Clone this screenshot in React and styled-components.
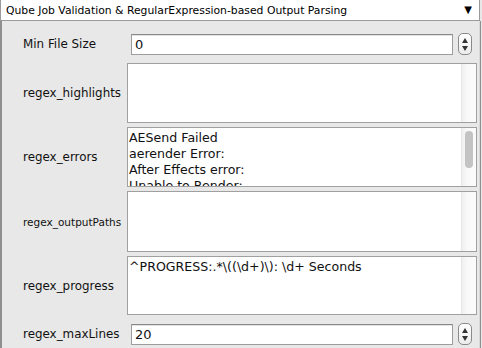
import React from 'react';
import styled, { createGlobalStyle } from 'styled-components';

const GlobalStyle = createGlobalStyle`
  html, body {
    margin: 0;
    padding: 0;
    background: #e8e8e8;
  }
  body {
    font-family: "DejaVu Sans", "Liberation Sans", sans-serif;
    color: #111;
  }
`;

const Frame = styled.div`
  width: 482px;
  height: 348px;
  display: flex;
  flex-direction: column;
  overflow: hidden;
  background: #e8e8e8;
`;

const Header = styled.div`
  flex: none;
  display: flex;
  align-items: center;
  justify-content: space-between;
  padding: 0 7px 0 5px;
  margin-right: 2px;
  background: #fff;
  border-left: 1px solid #9a9a9a;
  border-right: 1px solid #9a9a9a;
  border-bottom: 1px solid #9a9a9a;
  box-sizing: border-box;
  height: 21px;
  font-size: 10.8px;
  color: #000;
`;

const Arrow = styled.span`
  font-size: 10px;
  line-height: 1;
`;

const Panel = styled.div`
  flex: 1;
  display: flex;
  flex-direction: column;
  gap: 4px;
  padding-top: 12px;
  margin-right: 1px;
  border-left: 2px solid #8f8f8f;
  border-right: 1px solid #8f8f8f;
  box-shadow: inset -1px 0 0 #d8d8d8;
`;

const Row = styled.div`
  display: grid;
  grid-template-columns: 125px 1fr;
  align-items: center;
  height: ${(p) => p.h}px;
  margin-top: ${(p) => p.mt || 0}px;
`;

const Label = styled.div`
  padding-left: 21px;
  font-size: ${(p) => (p.small ? 10.5 : 11.9)}px;
  white-space: nowrap;
`;

const FieldLine = styled.div`
  display: flex;
  align-items: center;
  height: 100%;
  padding-left: 4px;
  padding-right: 8px;
`;

const Input = styled.div`
  flex: 1;
  height: 21px;
  box-sizing: border-box;
  background: #fff;
  border: 1px solid #9d9d9d;
  border-top-color: #8a8a8a;
  box-shadow: inset 0 1px 0 #e2e2e2;
  font-size: 13px;
  line-height: 19px;
  padding-left: 3px;
`;

const Spinner = styled.div`
  flex: none;
  width: 14px;
  height: 22px;
  margin-left: 5px;
  box-sizing: border-box;
  border: 1px solid #8a8a8a;
  border-radius: 5px;
  background: linear-gradient(#ffffff, #ececec);
  display: flex;
  flex-direction: column;
  align-items: center;
  justify-content: center;
  gap: 3px;
`;

const Tri = styled.span`
  width: 0;
  height: 0;
  border-left: 3px solid transparent;
  border-right: 3px solid transparent;
  ${(p) => (p.up ? 'border-bottom: 5px solid #333;' : 'border-top: 5px solid #333;')}
`;

const Area = styled.div`
  height: 100%;
  margin-right: 3px;
  box-sizing: border-box;
  background: #fff;
  border: 1px solid #a0a0a0;
  display: flex;
  overflow: hidden;
`;

const AreaText = styled.div`
  flex: 1;
  padding: 2px 0 0 1px;
  font-size: 12.6px;
  line-height: 16px;
  white-space: pre;
  overflow: hidden;
`;

const Track = styled.div`
  flex: none;
  width: 15px;
  background: linear-gradient(90deg, #f0f0f0, #f9f9f9 40%, #fbfbfb);
  border-left: 1px solid #e6e6e6;
  padding: 3px 2px 0 3px;
  box-sizing: border-box;
`;

const Thumb = styled.div`
  width: 8px;
  height: 37px;
  border-radius: 4px;
  background: #c3c3c3;
`;

function NumberRow({ label, value, mt }) {
  return (
    <Row h={21} mt={mt}>
      <Label>{label}</Label>
      <FieldLine>
        <Input>{value}</Input>
        <Spinner>
          <Tri up />
          <Tri />
        </Spinner>
      </FieldLine>
    </Row>
  );
}

function AreaRow({ label, text, small, thumb, h = 60, mt }) {
  return (
    <Row h={h} mt={mt}>
      <Label small={small}>{label}</Label>
      <Area>
        <AreaText>{text}</AreaText>
        <Track>{thumb ? <Thumb /> : null}</Track>
      </Area>
    </Row>
  );
}

export default function App() {
  return (
    <Frame>
      <GlobalStyle />
      <Header>
        <span>Qube Job Validation &amp; RegularExpression-based Output Parsing</span>
        <Arrow>▼</Arrow>
      </Header>
      <Panel>
        <NumberRow label="Min File Size" value="0" />
        <AreaRow label="regex_highlights" text="" mt={5} />
        <AreaRow
          label="regex_errors"
          thumb
          text={'AESend Failed\naerender Error:\nAfter Effects error:\nUnable to Render:'}
        />
        <AreaRow label="regex_outputPaths" small text="" h={61} />
        <AreaRow label="regex_progress" h={59} text={'^PROGRESS:.*\\((\\d+)\\): \\d+ Seconds'} />
        <NumberRow label="regex_maxLines" value="20" mt={4} />
      </Panel>
    </Frame>
  );
}
